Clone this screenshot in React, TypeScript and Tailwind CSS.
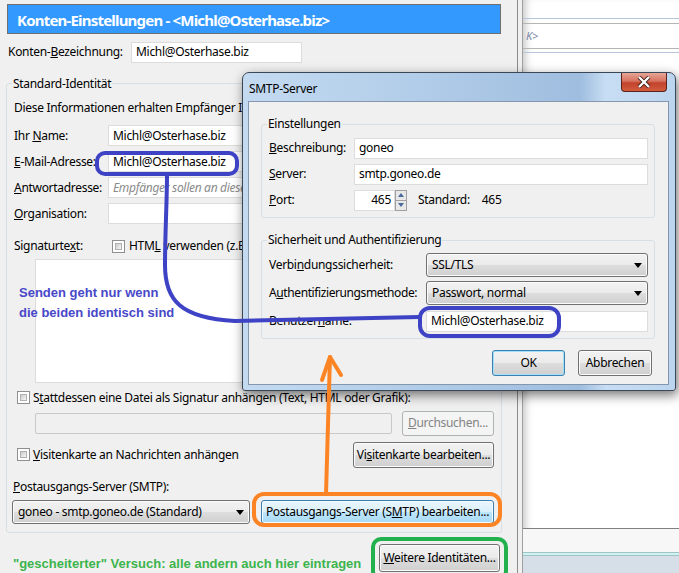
import React from "react";

const btn =
  "flex items-center justify-center whitespace-nowrap rounded-[3px] border border-[#707070] bg-[linear-gradient(#f2f2f2_0%,#ebebeb_48%,#dddddd_52%,#cfcfcf_100%)] shadow-[inset_0_0_0_1px_#fbfbfb] text-black";
const btnBlue =
  "flex items-center justify-center whitespace-nowrap rounded-[3px] border border-[#3c7fb1] bg-[linear-gradient(#eaf6fd_0%,#d9f0fc_48%,#bee6fd_52%,#a7d9f5_100%)] shadow-[inset_0_0_0_1px_#f4fbfe] text-black";
const btnOk =
  "flex items-center justify-center whitespace-nowrap rounded-[3px] border border-[#3c7fb1] bg-[linear-gradient(#f2f2f2_0%,#ebebeb_48%,#dddddd_52%,#cfcfcf_100%)] shadow-[inset_0_0_0_1px_#9fe1f9] text-black";
const btnOff =
  "flex items-center justify-center whitespace-nowrap rounded-[3px] border border-[#adb2b5] bg-[#f4f4f4] text-[#838383]";
const input = "h-[21px] bg-white border border-[#dcdcdc] flex items-center px-[4px] whitespace-nowrap overflow-hidden";
const select =
  "flex items-center justify-between whitespace-nowrap rounded-[3px] border border-[#707070] bg-[linear-gradient(#f2f2f2_0%,#ebebeb_48%,#dddddd_52%,#cfcfcf_100%)] shadow-[inset_0_0_0_1px_#fbfbfb] px-[5px]";

function Check() {
  return (
    <span className="inline-block w-[13px] h-[13px] border border-[#8e8f8f] bg-white p-[2px] shrink-0">
      <span className="block w-full h-full bg-[linear-gradient(135deg,#cbcbcb,#f6f6f6)] border border-[#b0b0b0]" />
    </span>
  );
}

function Arrow() {
  return (
    <svg width="8" height="5" viewBox="0 0 8 5">
      <path d="M0 0h8L4 5z" fill="#000" />
    </svg>
  );
}

function SmtpDialog() {
  return (
    <div className="absolute left-[242px] top-[72px] w-[434px] h-[319px] rounded-t-[7px] rounded-b-[3px] border border-[#3a4756] bg-[linear-gradient(90deg,#c3daf1_0%,#b2cde9_40%,#9fbddf_78%,#c7ddf3_84%,#bcd5ee_100%)] shadow-[2px_4px_12px_rgba(0,0,0,0.55)] pl-[5px] pr-[6px] pb-[5px] flex flex-col">
      <div className="h-[28px] relative flex items-center pl-[1px] pt-[3px]">
        <span className="text-black">SMTP-Server</span>
        <div className="absolute right-[2px] top-0 w-[46px] h-[19px] rounded-b-[4px] border border-[#5a2218] border-t-0 bg-[linear-gradient(#e7a596_0%,#d6735e_45%,#c2432c_55%,#d25c3e_100%)] flex items-center justify-center">
          <svg width="14" height="12" viewBox="0 0 14 12">
            <path d="M2 1l10 10M12 1L2 11" stroke="#3a1a14" strokeWidth="4" />
            <path d="M2 1l10 10M12 1L2 11" stroke="#fff" strokeWidth="2.4" />
          </svg>
        </div>
      </div>
      <div className="flex-1 bg-[#f0f0f0] border border-[#8597ad] pl-[12px] pr-[13px] flex flex-col">
        <fieldset className="mt-[14px] border border-[#d5dfe5] rounded-[3px] pl-[7px] pr-[6px] pb-[4px]">
          <legend className="-ml-[2px] px-[1px] leading-[16px]">Einstellungen</legend>
          <div className="mt-[3px] h-[26px] flex items-center">
            <span className="w-[85px]">
              <u>B</u>eschreibung:
            </span>
            <div className={`${input} flex-1`}>goneo</div>
          </div>
          <div className="h-[26px] flex items-center">
            <span className="w-[85px]">
              <u>S</u>erver:
            </span>
            <div className={`${input} flex-1`}>smtp.goneo.de</div>
          </div>
          <div className="h-[26px] flex items-center">
            <span className="w-[85px]">
              <u>P</u>ort:
            </span>
            <div className={`${input} w-[41px] justify-end pr-[3px]`}>465</div>
            <div className="w-[12px] h-[21px] flex flex-col border border-[#a0a0a0] bg-[#e8e8e8]">
              <div className="flex-1 flex items-center justify-center border-b border-[#a0a0a0]">
                <svg width="6" height="4" viewBox="0 0 6 4"><path d="M0 4h6L3 0z" fill="#4a6a9a" /></svg>
              </div>
              <div className="flex-1 flex items-center justify-center">
                <svg width="6" height="4" viewBox="0 0 6 4"><path d="M0 0h6L3 4z" fill="#4a6a9a" /></svg>
              </div>
            </div>
            <span className="ml-[11px]">Standard:</span>
            <span className="ml-[12px]">465</span>
          </div>
        </fieldset>
        <fieldset className="mt-[14px] border border-[#d5dfe5] rounded-[3px] pl-[7px] pr-[6px] pb-[3px]">
          <legend className="-ml-[2px] px-[1px] leading-[16px]">Sicherheit und Authentifizierung</legend>
          <div className="mt-[3px] h-[28px] flex items-center">
            <span className="w-[157px]">
              Verbi<u>n</u>dungssicherheit:
            </span>
            <div className={`${select} flex-1 h-[24px]`}>
              <span>SSL/TLS</span>
              <Arrow />
            </div>
          </div>
          <div className="h-[28px] flex items-center">
            <span className="w-[157px] tracking-[-0.4px]">
              A<u>u</u>thentifizierungsmethode:
            </span>
            <div className={`${select} flex-1 h-[24px]`}>
              <span>Passwort, normal</span>
              <Arrow />
            </div>
          </div>
          <div className="h-[28px] flex items-center">
            <span className="w-[157px]">
              Benutzer<u>n</u>ame:
            </span>
            <div className={`${input} flex-1`}>Michl@Osterhase.biz</div>
          </div>
        </fieldset>
        <div className="mt-[11px] flex justify-end gap-[13px] pr-[3px]">
          <button className={`${btnOk} w-[73px] h-[26px]`}>OK</button>
          <button className={`${btn} w-[74px] h-[26px]`}>Abbrechen</button>
        </div>
      </div>
    </div>
  );
}

function Annotations() {
  return (
    <>
      <svg className="absolute inset-0 pointer-events-none" width="679" height="573" viewBox="0 0 679 573">
        <g fill="none" stroke="#3d43c4" strokeWidth="4" strokeLinecap="round">
          <rect x="97" y="153" width="140" height="21" rx="8" />
          <path d="M167 175 C167 200 165 235 165 265 C165 300 180 318 235 321 L420 317" />
          <rect x="420" y="308" width="139" height="28" rx="10" />
        </g>
        <g fill="none" stroke="#fd8424" strokeWidth="4" strokeLinecap="round" strokeLinejoin="round">
          <path d="M326 494 C327 450 329 400 330 357" />
          <path d="M322 380 L330 357 L341 375" />
          <rect x="254" y="494" width="246" height="31" rx="10" />
        </g>
        <rect x="373" y="539" width="133" height="40" rx="8" fill="none" stroke="#22b14c" strokeWidth="4" />
      </svg>
      <div className="absolute left-[19px] top-[283px] font-['Liberation_Sans',Arial,sans-serif] font-bold text-[13px] leading-[20px] tracking-normal text-[#4848c9]">
        <div>Senden geht nur wenn</div>
        <div>die beiden identisch sind</div>
      </div>
    </>
  );
}

export default function App() {
  return (
    <div className="relative w-[679px] h-[573px] overflow-hidden flex bg-white font-['Noto_Sans',sans-serif] text-[12px] tracking-[-0.3px] text-black">
      <div className="w-[517px] h-full bg-[#f0f0f0] pt-[4px] flex flex-col">
        <div className="ml-[7px] w-[494px] h-[31px] bg-[#3399ff] border border-[#6f6f6f] flex items-center pl-[9px] pt-[2px] text-white font-bold text-[15px] tracking-[-0.8px]">
          Konten-Einstellungen - &lt;Michl@Osterhase.biz&gt;
        </div>
        <div className="mt-[8px] flex items-center pl-[8px]">
          <span className="w-[123px]">
            Konten-<u>B</u>ezeichnung:
          </span>
          <div className={`${input} w-[171px]`}>Michl@Osterhase.biz</div>
        </div>
        <fieldset className="mt-[13px] ml-[6px] w-[496px] border border-[#d5dfe5] rounded-[3px] pl-[7px] pr-[7px] pb-[7px]">
          <legend className="-ml-[2px] px-[1px] leading-[16px]">Standard-Identität</legend>
          <div className="h-[31px] pt-[2px] flex items-center whitespace-nowrap">
            Diese Informationen erhalten Empfänger Ihrer Nachrichten.
          </div>
          <div className="h-[26px] flex items-center">
            <span className="w-[94px]">
              Ihr <u>N</u>ame:
            </span>
            <div className={`${input} flex-1`}>Michl@Osterhase.biz</div>
          </div>
          <div className="h-[26px] flex items-center">
            <span className="w-[94px]">
              <u>E</u>-Mail-Adresse:
            </span>
            <div className={`${input} flex-1`}>Michl@Osterhase.biz</div>
          </div>
          <div className="h-[26px] flex items-center">
            <span className="w-[94px]">
              <u>A</u>ntwortadresse:
            </span>
            <div className={`${input} flex-1 italic text-[#8a8a8a]`}>Empfänger sollen an diese Adresse antworten</div>
          </div>
          <div className="h-[26px] flex items-center">
            <span className="w-[94px]">
              <u>O</u>rganisation:
            </span>
            <div className={`${input} flex-1`} />
          </div>
          <div className="mt-[7px] h-[25px] flex items-center">
            <span className="w-[98px]">
              Signaturte<u>x</u>t:
            </span>
            <Check />
            <span className="ml-[4px] whitespace-nowrap">
              HTM<u>L</u> verwenden (z.B. &lt;b&gt;fett&lt;/b&gt;)
            </span>
          </div>
          <div className="ml-[21px] h-[124px] bg-white border border-[#dcdcdc]" />
          <div className="mt-[4px] h-[22px] flex items-center pl-[3px]">
            <Check />
            <span className="ml-[3px] whitespace-nowrap">
              S<u>t</u>attdessen eine Datei als Signatur anhängen (Text, HTML oder Grafik):
            </span>
          </div>
          <div className="mt-[2px] h-[25px] flex items-center pl-[21px]">
            <div className="w-[357px] h-[21px] border border-[#c8c8c8] rounded-[2px] bg-[#f0f0f0]" />
            <button className={`${btnOff} ml-[10px] w-[92px] h-[25px]`}>
              <span>
                <u>D</u>urchsuchen...
              </span>
            </button>
          </div>
          <div className="mt-[6px] h-[26px] flex items-center justify-between pl-[3px]">
            <div className="flex items-center">
              <Check />
              <span className="ml-[3px] whitespace-nowrap">
                <u>V</u>isitenkarte an Nachrichten anhängen
              </span>
            </div>
            <button className={`${btn} w-[141px] h-[26px]`}>
              <span>
                Vi<u>s</u>itenkarte bearbeiten...
              </span>
            </button>
          </div>
          <div className="mt-[10px] h-[18px] flex items-center -ml-[1px]">
            <span>
              <u>P</u>ostausgangs-Server (SMTP):
            </span>
          </div>
          <div className="mt-[4px] h-[25px] flex items-center -ml-[2px]">
            <div className={`${select} w-[238px] h-[24px]`}>
              <span>goneo - smtp.goneo.de (Standard)</span>
              <Arrow />
            </div>
            <button className={`${btnBlue} ml-[11px] w-[233px] h-[24px]`}>
              <span>
                Postausgangs-Server (S<u>M</u>TP) bearbeiten...
              </span>
            </button>
          </div>
        </fieldset>
        <div className="mt-[10px] flex items-center pl-[13px] pr-[17px] justify-between">
          <span className="mt-[11px] font-['Liberation_Sans',Arial,sans-serif] font-bold text-[13px] tracking-normal text-[#3cb44b]">
            "gescheiterter" Versuch: alle andern auch hier eintragen
          </span>
          <button className={`${btn} w-[121px] h-[28px]`}>
            <span>
              <u>W</u>eitere Identitäten...
            </span>
          </button>
        </div>
      </div>
      <div className="w-[6px] h-full bg-[#f0f0f0] border-l border-[#8c8c8c] border-r border-r-[#a0a0a0]" />
      <div className="flex-1 h-full flex flex-col bg-white shadow-[inset_8px_0_8px_-6px_rgba(0,0,0,0.25)]">
        <div className="h-[18px] shrink-0" />
        <div className="h-[5px] shrink-0 border-t border-[#b5c6dc]" />
        <div className="h-[25px] shrink-0 border-t border-[#b4b4b4] flex items-center pl-[3px] italic text-[11px] text-[#7a8aa8]">K&gt;</div>
        <div className="h-[4px] shrink-0 border-t border-[#b4b4b4]" />
        <div className="border-t border-[#b5c6dc] flex-1" />
        <div className="h-[24px] shrink-0 border-t border-[#808080] bg-[#f7f7f7]" />
        <div className="h-[4px] shrink-0 bg-[#d3f1f1] border-y border-[#9cc6c6]" />
        <div className="h-[17px] shrink-0 bg-[#d6dee8]" />
      </div>
      <SmtpDialog />
      <Annotations />
    </div>
  );
}
